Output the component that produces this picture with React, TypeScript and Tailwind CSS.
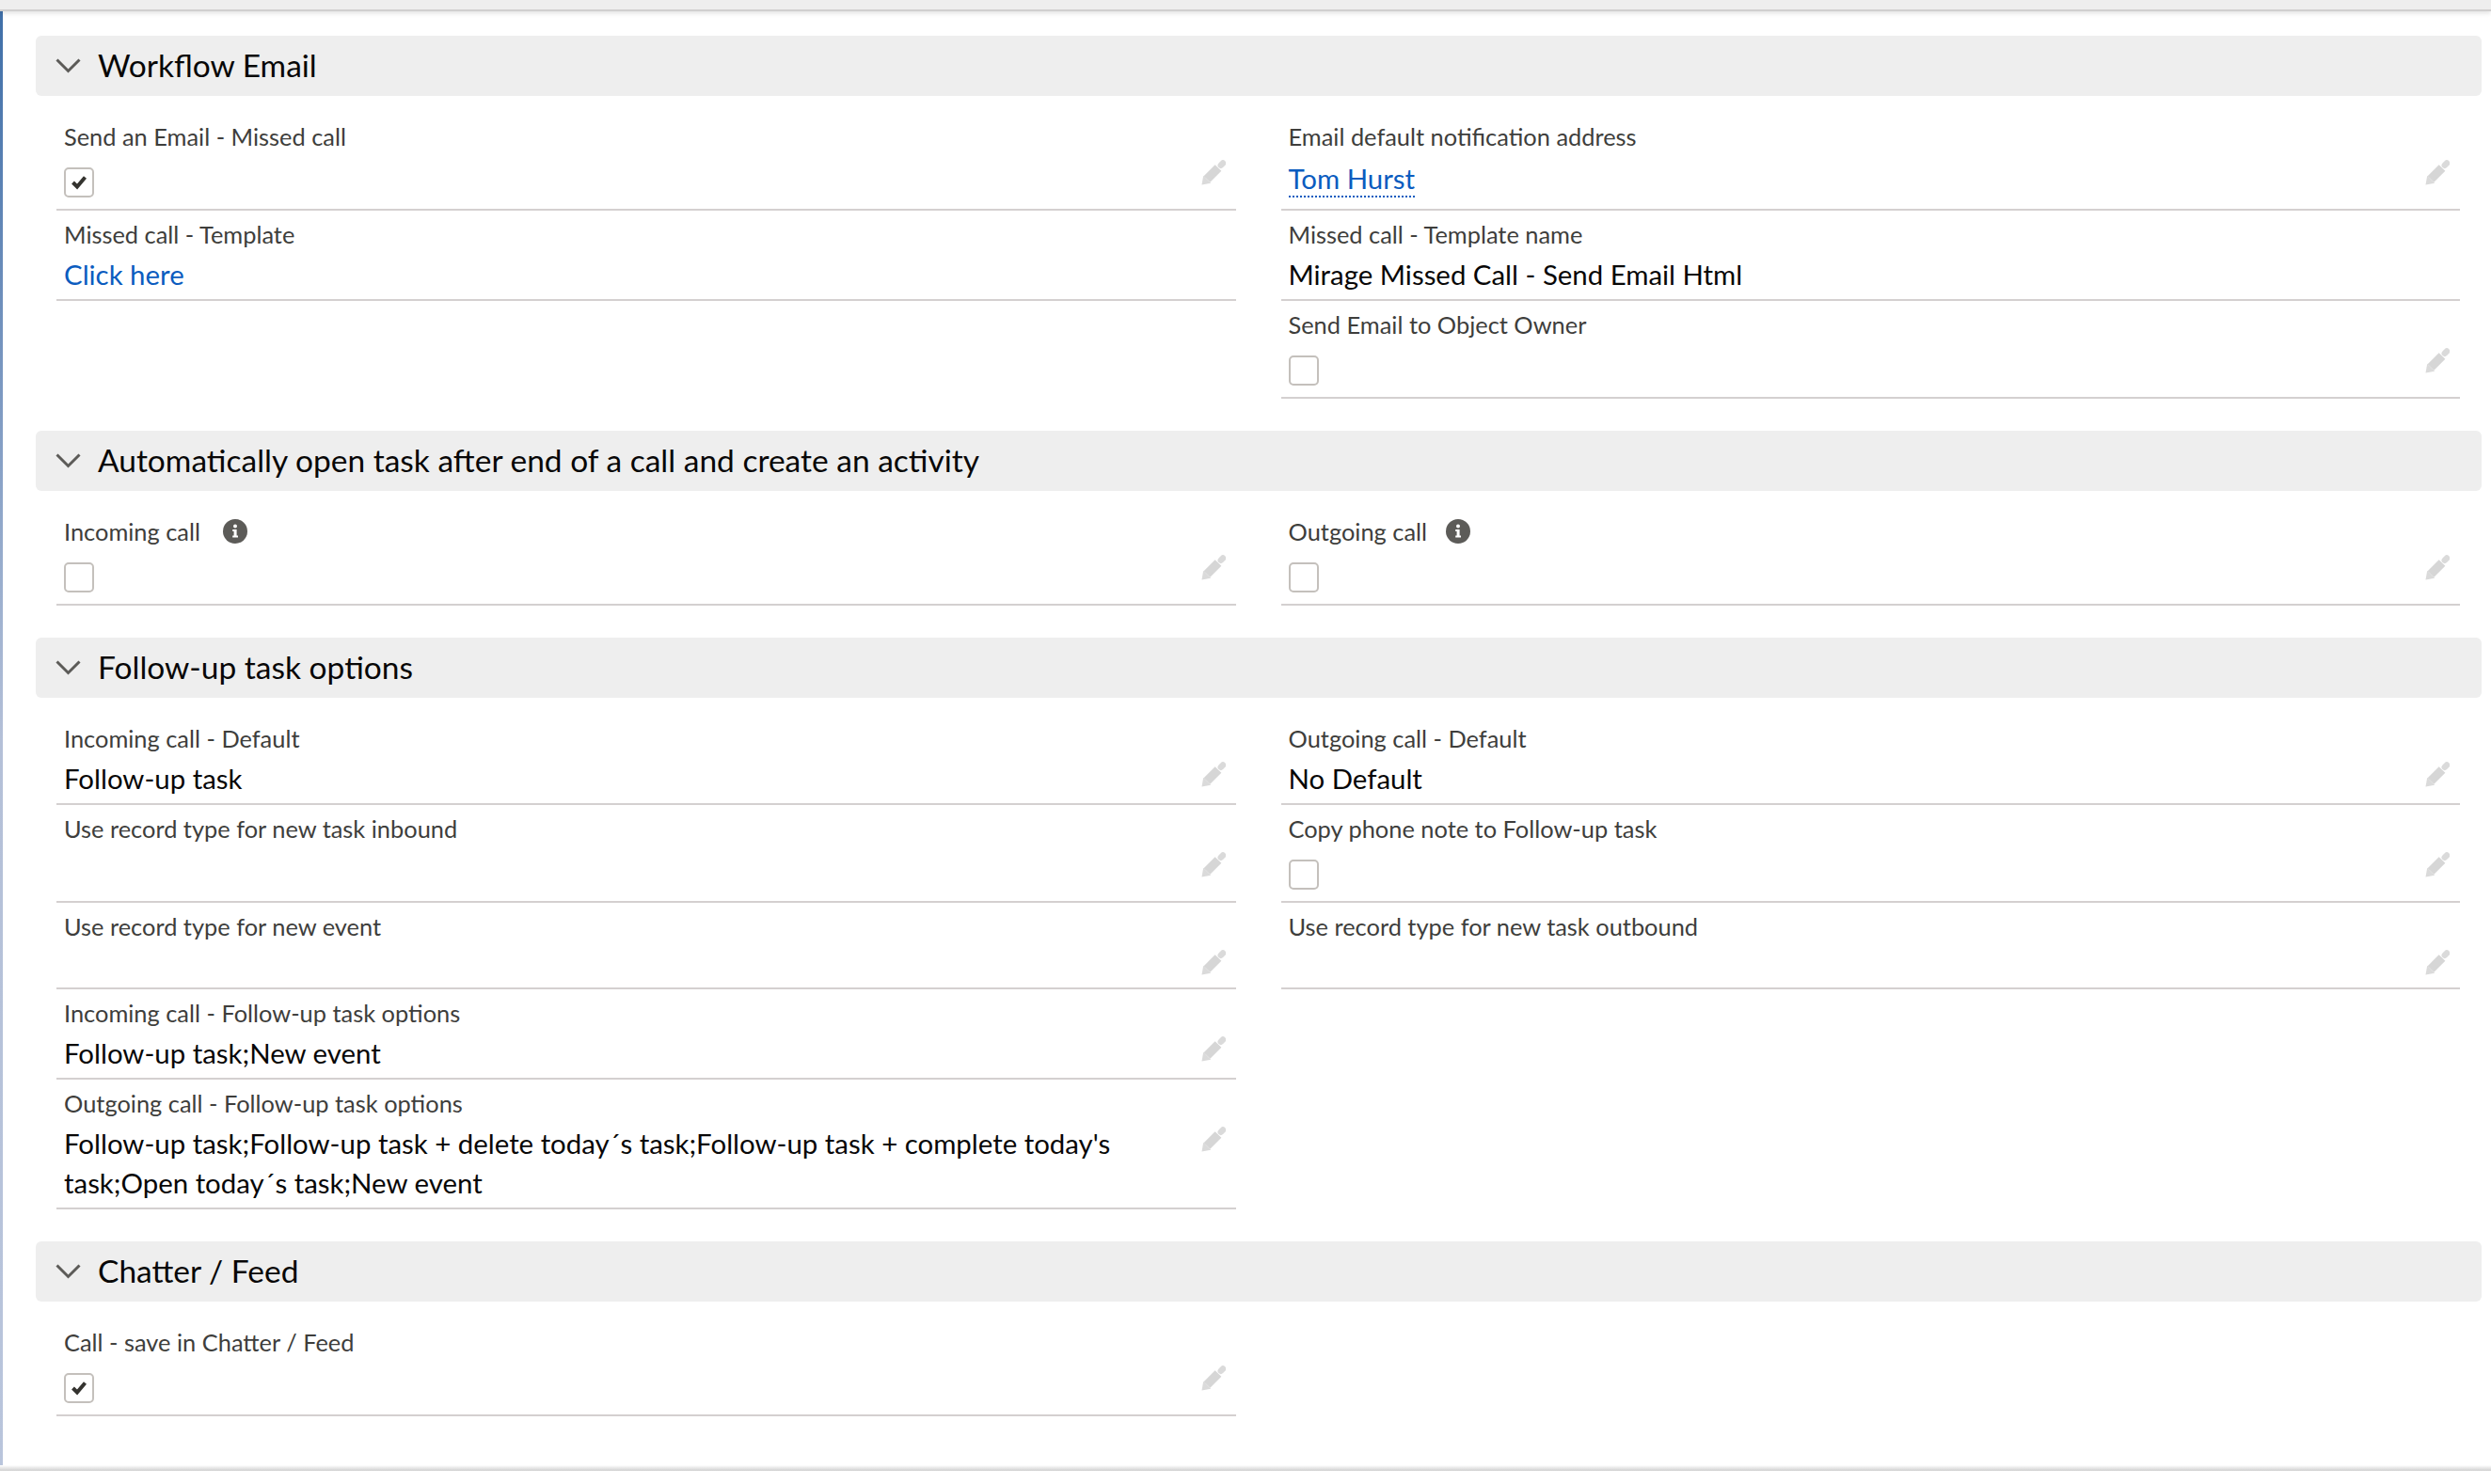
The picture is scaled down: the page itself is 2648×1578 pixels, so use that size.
import React from "react";

function Pencil() {
  return (
    <svg className="absolute right-[11px] top-[50px] w-[26px] h-[27px]" viewBox="0 0 26 27" fill="none">
      <path d="M6 20.5 L18 8.5" stroke="#d6d6d6" strokeWidth="9.5" />
      <path d="M20.8 5.7 L23 3.5" stroke="#dadada" strokeWidth="6.5" strokeLinecap="round" />
      <path d="M0.5 26.5 L2.2 16.8 L10.2 24.8 Z" fill="#dadada" />
    </svg>
  );
}

function Checkbox({ checked }: { checked?: boolean }) {
  return (
    <div className="w-[32px] h-[32px] rounded-[5px] border-2 border-[#c4c0bc] bg-white flex items-center justify-center">
      {checked && (
        <svg className="w-[16px] h-[16px]" viewBox="0 0 16 16" fill="none">
          <path d="M1.5 8 L6 12.5 L14.5 2.5" stroke="#34332f" strokeWidth="4" />
        </svg>
      )}
    </div>
  );
}

function Info({ wide }: { wide?: boolean }) {
  return (
    <svg className={`w-[26px] h-[26px] ${wide ? "ml-[24px]" : "ml-[20px]"}`} viewBox="0 0 26 26">
      <circle cx="13" cy="13" r="13" fill="#5c5b58" />
      <circle cx="13" cy="7.6" r="2" fill="#fff" />
      <path d="M10.2 11 H14.6 V17.6 H16 V19.6 H10.2 V17.6 H11.6 V13 H10.2 Z" fill="#fff" />
    </svg>
  );
}

function Field({
  label,
  info,
  infoWide,
  value,
  link,
  user,
  check,
  edit = true,
}: {
  label?: string;
  info?: boolean;
  infoWide?: boolean;
  value?: string;
  link?: boolean;
  user?: boolean;
  check?: "on" | "off";
  edit?: boolean;
}) {
  return (
    <div className="relative border-b-2 border-[#d4d0d0] pt-[8px] pb-[5px] px-[8px] pr-[80px]">
      <div className="flex items-center h-[36px] pb-[2px] text-[25.4px] leading-[34px] text-[#3e3e3c]">
        {label}
        {info && <Info wide={infoWide} />}
      </div>
      {check && (
        <div className="mt-[14px] mb-[7px]">
          <Checkbox checked={check === "on"} />
        </div>
      )}
      {user && (
        <div className="mt-[8px] mb-[7px]">
          <span className="inline-block h-[38px] text-[29.4px] leading-[36px] text-[#0b5cbf] border-b-2 border-dotted border-[#0b5cbf]">
            {value}
          </span>
        </div>
      )}
      {!check && !user && value && (
        <div className={`mt-[3px] text-[29.4px] leading-[42px] ${link ? "text-[#0b5cbf]" : "text-[#080707]"}`}>
          {value}
        </div>
      )}
      {!check && !user && !value && <div className="h-[41px]" />}
      {edit && <Pencil />}
    </div>
  );
}

function Section({ title, children }: { title: string; children: React.ReactNode }) {
  return (
    <section>
      <div className="flex items-center h-[64px] rounded-[6px] bg-[#eeeeee] pl-[21px]">
        <svg className="w-[27px] h-[16px] shrink-0" viewBox="0 0 27 16" fill="none">
          <path d="M1.5 1.5 L13.5 13.5 L25.5 1.5" stroke="#5c5b58" strokeWidth="3" />
        </svg>
        <h2 className="ml-[18px] pb-[3px] text-[33.5px] leading-[48px] text-[#080707]">{title}</h2>
      </div>
      <div className="grid grid-cols-2 gap-x-[48px] mt-[18px] ml-[22px] mr-[23px]">{children}</div>
    </section>
  );
}

export default function App() {
  return (
    <div className="w-[2648px] h-[1578px] bg-white overflow-hidden flex flex-col font-['Lato','Liberation_Sans',sans-serif]">
      <div className="h-[12px] shrink-0 bg-[#eeeeee] border-b-2 border-[#d0cfcf] shadow-[0_2px_5px_rgba(0,0,0,0.12)] z-10" />
      <div className="flex h-[1552px] shrink-0">
        <div className="w-[3px] shrink-0 bg-gradient-to-b from-[#3f6fa8] via-[#b4c0d8] to-[#b9c5dc]" />
        <main className="flex-1 pt-[26px] pl-[35px] pr-[10px] flex flex-col gap-[34px]">
          <Section title="Workflow Email">
            <Field label="Send an Email - Missed call" check="on" />
            <Field label="Email default notification address" value="Tom Hurst" user />
            <Field label="Missed call - Template" value="Click here" link edit={false} />
            <Field label="Missed call - Template name" value="Mirage Missed Call - Send Email Html" edit={false} />
            <div />
            <Field label="Send Email to Object Owner" check="off" />
          </Section>
          <Section title="Automatically open task after end of a call and create an activity">
            <Field label="Incoming call" info infoWide check="off" />
            <Field label="Outgoing call" info check="off" />
          </Section>
          <Section title="Follow-up task options">
            <Field label="Incoming call - Default" value="Follow-up task" />
            <Field label="Outgoing call - Default" value="No Default" />
            <Field label="Use record type for new task inbound" />
            <Field label="Copy phone note to Follow-up task" check="off" />
            <Field label="Use record type for new event" />
            <Field label="Use record type for new task outbound" />
            <Field label="Incoming call - Follow-up task options" value="Follow-up task;New event" />
            <div />
            <Field
              label="Outgoing call - Follow-up task options"
              value="Follow-up task;Follow-up task + delete today´s task;Follow-up task + complete today's task;Open today´s task;New event"
            />
            <div />
          </Section>
          <Section title="Chatter / Feed">
            <Field label="Call - save in Chatter / Feed" check="on" />
            <div />
          </Section>
        </main>
      </div>
      <div className="h-[6px] shrink-0 -mt-[6px] bg-gradient-to-b from-white to-[#cfcfcf] z-10" />
    </div>
  );
}
